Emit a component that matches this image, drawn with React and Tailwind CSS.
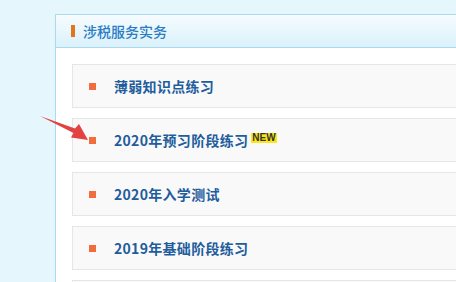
export default function App() {
  const rows = [
    { t: "薄弱知识点练习" },
    { t: "2020年预习阶段练习", isNew: true },
    { t: "2020年入学测试" },
    { t: "2019年基础阶段练习" },
    { t: "" },
  ];
  return (
    <div
      className="relative w-[456px] h-[282px] overflow-hidden bg-[#e5f6fd] pl-[55px] pt-[14px]"
      style={{ fontFamily: '"Noto Sans CJK SC", "Noto Sans", sans-serif' }}
    >
      <div className="w-[430px] border border-[#a9dbeb] bg-white">
        <div className="h-[33px] border-b border-[#a9dbeb] bg-gradient-to-b from-[#f6fcff] to-[#daf1fb] flex items-center pl-[15px]">
          <div className="w-[4px] h-[12px] bg-[#e3761c]" />
          <span className="ml-[8px] text-[14px] font-medium leading-none text-[#2a7cc3]">涉税服务实务</span>
        </div>
        <div className="pt-[16px] pl-[16px] flex flex-col gap-[10px]">
          {rows.map((r, i) => (
            <div
              key={i}
              className="h-[44px] border border-[#e6e6e6] bg-[#f9f9f9] flex items-center pl-[16px]"
            >
              <div className="w-[7px] h-[7px] bg-[#f26d3b]" />
              <span className="ml-[18px] text-[14px] font-bold leading-none tracking-[0.3px] text-[#1f5d9c]">{r.t}</span>
              {r.isNew && (
                <span className="ml-[3px] mt-[-4px] px-[1px] bg-[#fde71a] text-[10px] font-bold leading-[10px] text-[#333]"
                  style={{ fontFamily: '"Liberation Sans", sans-serif' }}>
                  NEW
                </span>
              )}
            </div>
          ))}
        </div>
      </div>
      <svg className="absolute left-0 top-0" width="456" height="282" viewBox="0 0 456 282">
        <polygon
          points="40,116 75,128.5 79,124 88,140 71,137.5 73.5,133"
          fill="#e34242"
        />
      </svg>
    </div>
  );
}
